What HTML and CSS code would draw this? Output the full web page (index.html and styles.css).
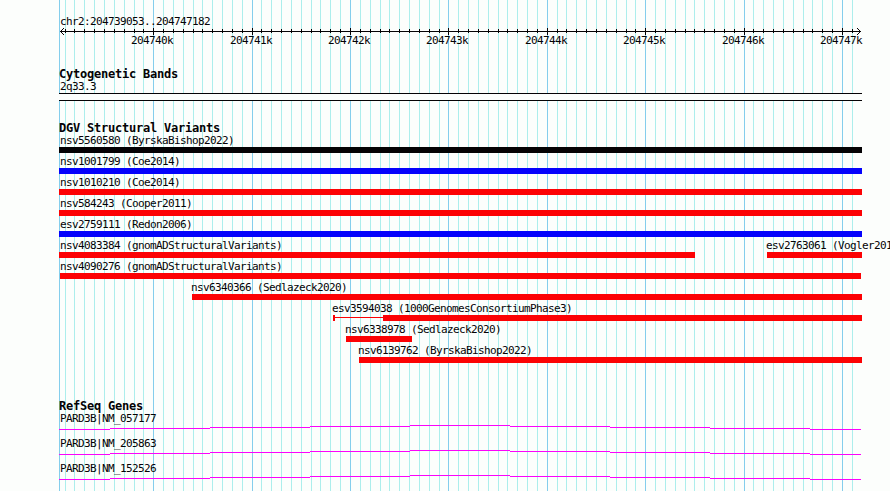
FILE: index.html
```
<!DOCTYPE html>
<html lang="en">
<head>
    <meta charset="UTF-8">
    <title>chr2:204739053..204747182</title>
    <link rel="stylesheet" href="styles.css">
</head>
<body>
    <svg id="grid" class="grid" width="890" height="491"></svg>

    <div class="panel">
        <div class="region">
            <div class="label">chr2:204739053..204747182</div>
            <svg id="ruler" class="ruler" width="830" height="22"></svg>
        </div>

        <div class="track cytobands">
            <h2>Cytogenetic Bands</h2>
            <div class="label">2q33.3</div>
            <div class="band"></div>
        </div>

        <div class="track variants">
            <h2>DGV Structural Variants</h2>
            <div class="row">
                <div class="feature full black"><span class="label">nsv5560580 (ByrskaBishop2022)</span></div>
            </div>
            <div class="row">
                <div class="feature full gain"><span class="label">nsv1001799 (Coe2014)</span></div>
            </div>
            <div class="row">
                <div class="feature full loss"><span class="label">nsv1010210 (Coe2014)</span></div>
            </div>
            <div class="row">
                <div class="feature full loss"><span class="label">nsv584243 (Cooper2011)</span></div>
            </div>
            <div class="row">
                <div class="feature full gain"><span class="label">esv2759111 (Redon2006)</span></div>
            </div>
            <div class="row split">
                <div class="feature nsv4083384 loss"><span class="label">nsv4083384 (gnomADStructuralVariants)</span></div>
                <div class="feature esv2763061 loss"><span class="label">esv2763061 (Vogler2010)</span></div>
            </div>
            <div class="row">
                <div class="feature nsv4090276 loss"><span class="label">nsv4090276 (gnomADStructuralVariants)</span></div>
            </div>
            <div class="row">
                <div class="feature nsv6340366 loss"><span class="label">nsv6340366 (Sedlazeck2020)</span></div>
            </div>
            <div class="row">
                <div class="feature esv3594038 gapped"><span class="label">esv3594038 (1000GenomesConsortiumPhase3)</span></div>
            </div>
            <div class="row">
                <div class="feature nsv6338978 loss"><span class="label">nsv6338978 (Sedlazeck2020)</span></div>
            </div>
            <div class="row">
                <div class="feature nsv6139762 loss"><span class="label">nsv6139762 (ByrskaBishop2022)</span></div>
            </div>
        </div>

        <div class="track genes">
            <h2>RefSeq Genes</h2>
            <div class="gene">
                <div class="label">PARD3B|NM_057177</div>
                <svg class="intron" width="803" height="5"><path d="M0 4.5h51m0-1h100m0-1h100m0-1h100m0-1h100m0 1h100m0 1h100m0 1h100m0 1h51"/></svg>
            </div>
            <div class="gene">
                <div class="label">PARD3B|NM_205863</div>
                <svg class="intron" width="803" height="5"><path d="M0 4.5h51m0-1h100m0-1h100m0-1h100m0-1h100m0 1h100m0 1h100m0 1h100m0 1h51"/></svg>
            </div>
            <div class="gene">
                <div class="label">PARD3B|NM_152526</div>
                <svg class="intron" width="803" height="5"><path d="M0 4.5h51m0-1h100m0-1h100m0-1h100m0-1h100m0 1h100m0 1h100m0 1h100m0 1h51"/></svg>
            </div>
        </div>
    </div>
    <script src="ruler.js"></script>
</body>
</html>
```
FILE: styles.css
```
body {
    margin: 0;
    width: 890px;
    height: 491px;
    overflow: hidden;
    background: #fcfefc;
    color: #040204;
    font-family: "DejaVu Sans Mono", monospace;
}
svg {
    display: block;
    shape-rendering: crispEdges;
}
/* grid lies behind all the tracks */
.grid {
    position: absolute;
    top: 0;
    left: 0;
    z-index: -1;
}
.grid path {
    fill: none;
    stroke: #aceeec;
}
.grid .major {
    stroke: #84ceec;
}
.panel {
    width: 803px;
    padding: 14px 0 0 59px;
}
h2 {
    margin: 0;
    height: 13px;
    font-size: 12px;
    line-height: 13px;
    letter-spacing: -0.225px;
    white-space: nowrap;
}
.label {
    display: block;
    height: 14px;
    padding-left: 1px;
    font-size: 11px;
    line-height: 16px;
    letter-spacing: -0.622px;
    white-space: nowrap;
}

.ruler {
    overflow: visible;
}
.ruler path {
    fill: none;
    stroke: #040204;
}
.ruler text {
    font-size: 11px;
    letter-spacing: -0.622px;
    fill: #040204;
}

.cytobands {
    margin-top: 18px;
}
.cytobands .label {
    height: 12px;
    line-height: 12px;
}
.band {
    height: 6px;
    border-top: 1px solid #040204;
    border-bottom: 1px solid #040204;
    background: #fcfefc;
}

.variants {
    margin-top: 21px;
}
.variants h2 {
    height: 11px;
}
.row {
    display: flex;
    height: 21px;
}
.split {
    justify-content: space-between;
}
.feature {
    height: 14px;
    border-bottom: 6px solid #fc0204;
}
.full {
    width: 803px;
}
.black {
    border-color: #040204;
}
.gain {
    border-color: #0402fc;
}
.nsv4083384 {
    width: 636px;
}
.esv2763061 {
    width: 95px;
}
.nsv4090276 {
    margin-left: 1px;
    width: 801px;
}
.nsv6340366 {
    margin-left: 133px;
    width: 670px;
}
.esv3594038 {
    margin-left: 274px;
    width: 529px;
}
.nsv6338978 {
    margin-left: 287px;
    width: 66px;
}
.nsv6139762 {
    margin-left: 300px;
    width: 503px;
}
.nsv4090276 .label {
    padding-left: 0;
}
.nsv6340366 .label,
.esv3594038 .label,
.nsv6338978 .label,
.nsv6139762 .label,
.esv2763061 .label {
    margin-left: -1px;
    padding-left: 0;
}
/* two blocks joined by a thin connector */
.gapped {
    height: 20px;
    border-bottom: 0;
    background:
        linear-gradient(#fc0204, #fc0204) 0 14px / 2px 6px no-repeat,
        linear-gradient(#fc0204, #fc0204) 0 16px / 50px 1px no-repeat,
        linear-gradient(#fc0204, #fc0204) 50px 14px / 479px 6px no-repeat;
}

.genes {
    margin-top: 36px;
}
.genes h2 {
    height: 11px;
}
.gene {
    height: 25px;
}
.intron path {
    fill: none;
    stroke: #fc02fc;
}
```
FILE: ruler.js
```
// 800px for 8130 bases, first full kilobase (204740k) at x = 153
var STEP = 9.84;
var ORIGIN = 153.7;
var LEFT = 59;

var minor = '';
var major = 'M59.5 0v491';
var ticks = 'M1 17.5h801';
var labels = '';

// arrowheads
ticks += 'M2 16.5h1m0-1h1m0-1h1M2 18.5h1m0 1h1m0 1h1';
ticks += 'M801 16.5h-1m0-1h-1m0-1h-1M801 18.5h-1m0 1h-1m0 1h-1';

for (var n = -9; n <= 71; n++) {
    var x = Math.floor(ORIGIN + n * STEP) + 0.5;
    var rx = x - LEFT;
    if (n % 10 === 0) {
        major += 'M' + x + ' 0v491';
        ticks += 'M' + rx + ' 14v7';
        labels += '<text x="' + (rx - 22.5) + '" y="30">' + (204740 + n / 10) + 'k</text>';
    } else {
        minor += 'M' + x + ' 0v491';
        ticks += 'M' + rx + ' 15v4';
    }
}

document.getElementById('grid').innerHTML =
    '<path d="' + minor + '"/><path class="major" d="' + major + '"/>';
document.getElementById('ruler').innerHTML =
    '<g transform="translate(0 -14)"><path d="' + ticks + '"/>' + labels + '</g>';
```
